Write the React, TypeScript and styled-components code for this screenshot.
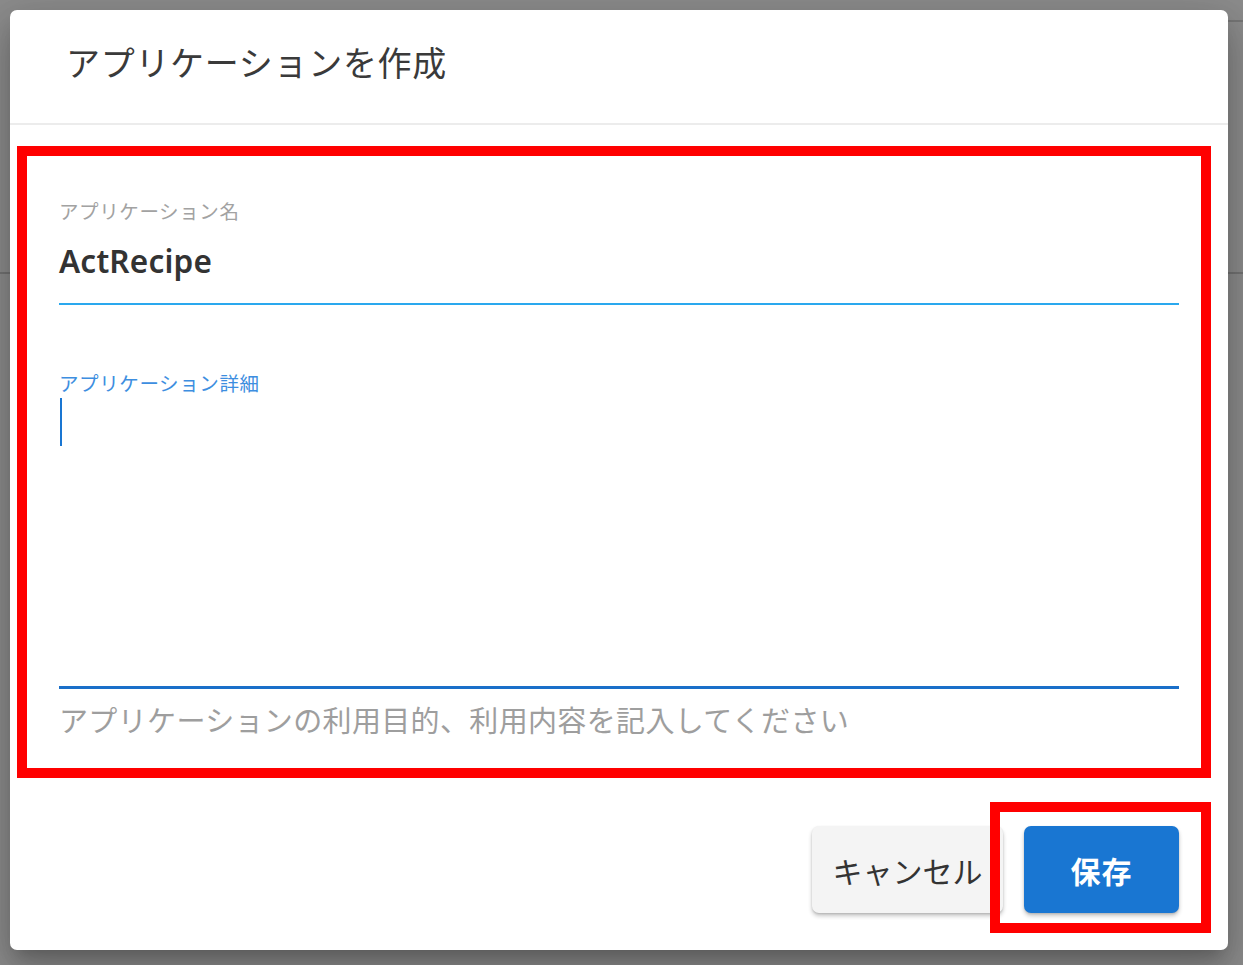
import React from 'react'
import styled, { createGlobalStyle } from 'styled-components'
// ______________________________________________________
//
const GlobalStyle = createGlobalStyle`
  html, body {
    margin: 0;
    padding: 0;
  }
  body {
    width: 1243px;
    height: 965px;
    overflow: hidden;
    font-family: "Noto Sans", "Noto Sans CJK JP", sans-serif;
    background:
      linear-gradient(#737373, #737373) 0 272px / 100% 2px no-repeat,
      linear-gradient(#767676, #767676) right 0 top 20px / 400px 2px no-repeat,
      #8c8c8c;
  }
`
// ______________________________________________________
//
const colors = {
  text: '#333333',
  sub: '#9e9e9e',
  primary: '#1976d2',
  focusLine: '#1a6fc9',
  nameLine: '#2aa8ee',
  label: '#3d8ee0',
  divider: '#ececec',
  mark: '#ff0000',
}
// ______________________________________________________
//
const Page = styled.div`
  padding: 10px;
`
const Dialog = styled.div`
  position: relative;
  box-sizing: border-box;
  display: flex;
  flex-direction: column;
  width: 1218px;
  height: 940px;
  background: #fff;
  border-radius: 7px;
  box-shadow: 0 11px 15px -7px rgba(0, 0, 0, 0.2),
    0 24px 38px 3px rgba(0, 0, 0, 0.14), 0 9px 46px 8px rgba(0, 0, 0, 0.12);
`
const Header = styled.header`
  display: flex;
  align-items: center;
  box-sizing: border-box;
  height: 115px;
  padding: 0 56px 11px;
  border-bottom: 2px solid ${colors.divider};
`
const Title = styled.h2`
  margin: 0;
  font-size: 34px;
  font-weight: 400;
  color: #3a3a3a;
  letter-spacing: 0.7px;
`
const Content = styled.div`
  display: flex;
  flex-direction: column;
  padding: 77px 49px 0;
`
const Field = styled.div<{ $gap?: number }>`
  display: flex;
  flex-direction: column;
  margin-top: ${p => p.$gap || 0}px;
`
const Label = styled.label<{ $focused?: boolean }>`
  font-size: 19.5px;
  line-height: 20px;
  letter-spacing: 0.6px;
  color: ${p => (p.$focused ? colors.label : '#a2a2a2')};
`
const Value = styled.div`
  margin-top: 18px;
  padding-bottom: 21px;
  font-family: "Noto Sans", sans-serif;
  font-size: 31.5px;
  font-weight: 600;
  line-height: 42px;
  letter-spacing: 0.2px;
  color: ${colors.text};
  border-bottom: 2px solid ${colors.nameLine};
`
const TextArea = styled.div`
  height: 288px;
  padding-top: 4px;
  border-bottom: 3px solid ${colors.focusLine};
`
const Caret = styled.span`
  display: block;
  width: 2px;
  height: 48px;
  margin-left: 1px;
  background: ${colors.primary};
`
const Helper = styled.p`
  margin: 15px 0 0;
  font-size: 29px;
  line-height: 34px;
  letter-spacing: 0.35px;
  color: ${colors.sub};
`
const Actions = styled.div`
  display: flex;
  justify-content: flex-end;
  gap: 21px;
  margin-top: auto;
  padding: 0 49px 37px;
`
const Button = styled.button<{ $primary?: boolean }>`
  box-sizing: border-box;
  display: flex;
  align-items: center;
  justify-content: center;
  height: 87px;
  padding: 0;
  width: ${p => (p.$primary ? 155 : 191)}px;
  border: none;
  border-radius: 7px;
  font-family: "Noto Sans", "Noto Sans CJK JP", sans-serif;
  font-size: 30px;
  font-weight: ${p => (p.$primary ? 700 : 400)};
  letter-spacing: ${p => (p.$primary ? 1 : 0)}px;
  color: ${p => (p.$primary ? '#fff' : colors.text)};
  background: ${p => (p.$primary ? colors.primary : '#f4f4f4')};
  box-shadow: 0 3px 4px rgba(0, 0, 0, 0.22), 0 1px 2px rgba(0, 0, 0, 0.12);
`
// annotation frames drawn over the screenshot
const Mark = styled.div<{ $x: number; $y: number; $w: number; $h: number }>`
  position: absolute;
  left: ${p => p.$x}px;
  top: ${p => p.$y}px;
  width: ${p => p.$w}px;
  height: ${p => p.$h}px;
  box-sizing: border-box;
  border: 10px solid ${colors.mark};
  pointer-events: none;
`
// ______________________________________________________
//
const App: React.FC = () => (
  <Page>
    <GlobalStyle />
    <Dialog>
      <Header>
        <Title>アプリケーションを作成</Title>
      </Header>
      <Content>
        <Field>
          <Label>アプリケーション名</Label>
          <Value>ActRecipe</Value>
        </Field>
        <Field $gap={69}>
          <Label $focused>アプリケーション詳細</Label>
          <TextArea>
            <Caret />
          </TextArea>
          <Helper>アプリケーションの利用目的、利用内容を記入してください</Helper>
        </Field>
      </Content>
      <Actions>
        <Button>キャンセル</Button>
        <Button $primary>保存</Button>
      </Actions>
      <Mark $x={7} $y={136} $w={1194} $h={632} />
      <Mark $x={980} $y={792} $w={221} $h={131} />
    </Dialog>
  </Page>
)
// ______________________________________________________
//
export default App
